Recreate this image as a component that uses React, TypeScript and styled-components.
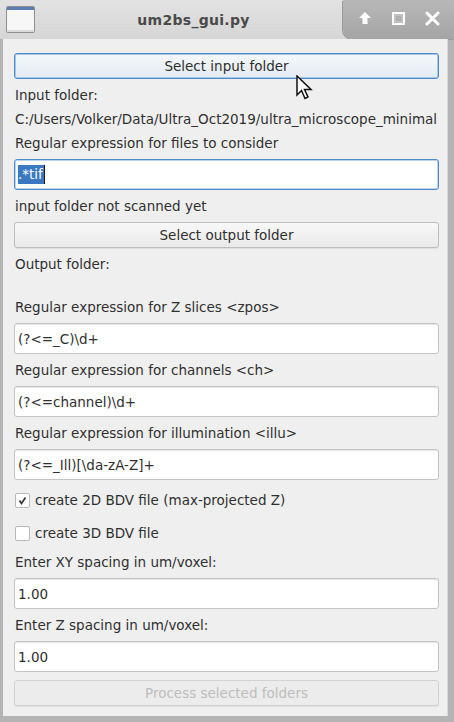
import React from "react";
import styled, { createGlobalStyle } from "styled-components";

const GlobalStyle = createGlobalStyle`
  html, body {
    margin: 0;
    padding: 0;
    background: #a9a9a9;
  }
  body {
    width: 454px;
    height: 722px;
    overflow: hidden;
    font-family: "DejaVu Sans", "Liberation Sans", sans-serif;
  }
`;

// 창 틀
const Window = styled.div`
  width: 454px;
  height: 722px;
  display: flex;
  flex-direction: column;
  background: #b4b4b4;
  box-sizing: border-box;
`;

const TitleBar = styled.div`
  height: 39px;
  display: flex;
  align-items: stretch;
  background: linear-gradient(#e2e2e2, #d6d6d6);
`;

const AppIconBox = styled.div`
  width: 40px;
  display: flex;
  align-items: center;
  justify-content: center;
`;

const Title = styled.div`
  flex: 1;
  display: flex;
  align-items: center;
  justify-content: center;
  padding-left: 4px;
  font-weight: bold;
  font-size: 14px;
  color: #4a4a4a;
  letter-spacing: 0.3px;
`;

const ControlGroup = styled.div`
  width: 111px;
  box-sizing: border-box;
  display: flex;
  align-items: center;
  justify-content: space-between;
  padding: 0 14px 3px 15px;
  background: linear-gradient(#b8b8b8, #a4a4a4);
  border-bottom-left-radius: 10px;
  box-shadow: -1px 1px 0 #9a9a9a;
`;

const Body = styled.div`
  flex: 1;
  margin: 0 7px 6px 3px;
  background: #efefef;
  padding: 14px 8px 0 11px;
  display: flex;
  flex-direction: column;
  gap: 8px;
  box-shadow: 1px 0 0 #dadada;
`;

const Button = styled.div<{ $focus?: boolean; $disabled?: boolean }>`
  height: 26px;
  box-sizing: border-box;
  display: flex;
  align-items: center;
  justify-content: center;
  font-size: 13.5px;
  border-radius: 3px;
  color: ${(p) => (p.$disabled ? "#bdbdbd" : "#2f2f2f")};
  border: 1px solid ${(p) => (p.$focus ? "#4c8bc9" : p.$disabled ? "#d2d2d2" : "#bdbdbd")};
  background: ${(p) =>
    p.$focus
      ? "linear-gradient(#f4f8fb, #e3ebf2)"
      : p.$disabled
      ? "#ececec"
      : "linear-gradient(#f8f8f8, #e9e9e9)"};
  box-shadow: ${(p) => (p.$focus ? "inset 0 0 0 1px #a9c8e6" : "0 1px 0 #e2e2e2")};
  position: relative;
`;

const Label = styled.div<{ $empty?: boolean }>`
  font-size: 13.5px;
  line-height: 16px;
  height: ${(p) => (p.$empty ? "11px" : "16px")};
  color: #2f2f2f;
  padding-left: 1px;
  white-space: nowrap;
  overflow: hidden;
`;

const Field = styled.div<{ $focus?: boolean }>`
  height: 31px;
  box-sizing: border-box;
  display: flex;
  align-items: center;
  padding-left: 3px;
  background: #ffffff;
  border: 1px solid ${(p) => (p.$focus ? "#4c8bc9" : "#c4c4c4")};
  border-radius: 3px;
  box-shadow: ${(p) => (p.$focus ? "inset 0 0 0 1px #bcd5ec" : "inset 0 1px 1px #e4e4e4")};
  font-size: 13.5px;
  color: #2f2f2f;
`;

const Selected = styled.span`
  background: #3a78c2;
  color: #ffffff;
  padding: 1px 1px 2px 0;
  border-right: 1px solid #1a1a1a;
`;

const CheckRow = styled.div<{ $h: number }>`
  height: ${(p) => p.$h}px;
  display: flex;
  align-items: center;
  gap: 5px;
  font-size: 13.5px;
  color: #2f2f2f;
  padding-left: 1px;
`;

const Box = styled.div`
  width: 13px;
  height: 13px;
  border: 1px solid #b9b9b9;
  border-radius: 2px;
  background: #ffffff;
  display: flex;
  align-items: center;
  justify-content: center;
`;

const Cursor = styled.svg`
  position: absolute;
  left: 281px;
  top: 21px;
`;

const WindowIcon = () => (
  <svg width="29" height="27" viewBox="0 0 29 27">
    <rect x="0.5" y="0.5" width="28" height="26" rx="1" fill="#f7f7f7" stroke="#8e8e8e" />
    <rect x="1" y="1" width="27" height="3" fill="#5b7fb3" />
    <rect x="1" y="24" width="27" height="2" fill="#dadada" />
  </svg>
);

const Check = () => (
  <svg width="11" height="11" viewBox="0 0 11 11">
    <path d="M2.5 5.5 L4.5 8.5 L8.5 2.5" fill="none" stroke="#333" strokeWidth="1.6" />
  </svg>
);

const App = () => {
  return (
    <>
      <GlobalStyle />
      <Window>
        <TitleBar>
          <AppIconBox>
            <WindowIcon />
          </AppIconBox>
          <Title>um2bs_gui.py</Title>
          <ControlGroup>
            <svg width="14" height="14" viewBox="0 0 14 14">
              <path d="M7 1 L13 7 L9.5 7 L9.5 13 L4.5 13 L4.5 7 L1 7 Z" fill="#ffffff" />
            </svg>
            <svg width="13" height="13" viewBox="0 0 13 13">
              <rect x="1" y="1" width="11" height="11" fill="none" stroke="#ffffff" strokeWidth="2" />
              <rect x="3" y="3" width="7" height="7" fill="none" stroke="#cfcfcf" strokeWidth="1" />
            </svg>
            <svg width="15" height="15" viewBox="0 0 15 15">
              <path d="M2 2 L13 13 M13 2 L2 13" stroke="#ffffff" strokeWidth="3" strokeLinecap="round" />
            </svg>
          </ControlGroup>
        </TitleBar>
        <Body>
          <Button $focus>
            Select input folder
            <Cursor width="18" height="26" viewBox="0 0 18 26">
              <path
                d="M1 1 L1 20 L5.5 15.5 L9 23.5 L12 22 L8.5 14.5 L15 14.5 Z"
                fill="#ffffff"
                stroke="#111"
                strokeWidth="1.5"
                strokeLinejoin="miter"
              />
            </Cursor>
          </Button>
          <Label>Input folder:</Label>
          <Label>C:/Users/Volker/Data/Ultra_Oct2019/ultra_microscope_minimal</Label>
          <Label>Regular expression for files to consider</Label>
          <Field $focus>
            <Selected>.*tif</Selected>
          </Field>
          <Label>input folder not scanned yet</Label>
          <Button>Select output folder</Button>
          <Label>Output folder:</Label>
          <Label $empty />
          <Label>Regular expression for Z slices &lt;zpos&gt;</Label>
          <Field>(?&lt;=_C)\d+</Field>
          <Label>Regular expression for channels &lt;ch&gt;</Label>
          <Field>(?&lt;=channel)\d+</Field>
          <Label>Regular expression for illumination &lt;illu&gt;</Label>
          <Field>(?&lt;=_Ill)[\da-zA-Z]+</Field>
          <CheckRow $h={24}>
            <Box>
              <Check />
            </Box>
            create 2D BDV file (max-projected Z)
          </CheckRow>
          <CheckRow $h={26}>
            <Box />
            create 3D BDV file
          </CheckRow>
          <Label>Enter XY spacing in um/voxel:</Label>
          <Field>1.00</Field>
          <Label>Enter Z spacing in um/voxel:</Label>
          <Field>1.00</Field>
          <Button $disabled>Process selected folders</Button>
        </Body>
      </Window>
    </>
  );
};

export default App;
